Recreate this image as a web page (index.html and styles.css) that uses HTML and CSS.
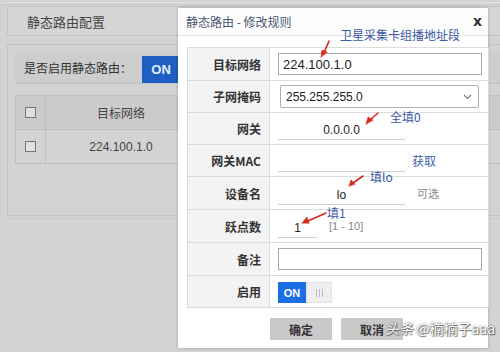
FILE: index.html
```html
<!DOCTYPE html>
<html>
<head>
<meta charset="utf-8">
<link rel="stylesheet" href="styles.css">
</head>
<body>
<div class="page">
  <div class="topline"></div>
  <div class="pagehead">静态路由配置</div>
  <div class="panel">
    <div class="switchrow">
      <span class="switchlabel">是否启用静态路由：</span>
      <span class="onbtn">ON</span>
    </div>
    <div class="grid">
      <div class="grow ghead">
        <div class="gcheck"><span class="cb"></span></div>
        <div class="gcell">目标网络</div>
        <div class="grest"></div>
      </div>
      <div class="grow">
        <div class="gcheck"><span class="cb"></span></div>
        <div class="gcell">224.100.1.0</div>
        <div class="grest"></div>
      </div>
    </div>
  </div>
  <div class="panelline"></div>
</div>

<div class="modal">
  <div class="mtitle">
    <span>静态路由 - 修改规则</span>
    <span class="close">x</span>
  </div>
  <div class="form">
    <div class="frow h33">
      <div class="flabel">目标网络</div>
      <div class="fval"><div class="box wide">224.100.1.0</div></div>
    </div>
    <div class="frow h32">
      <div class="flabel">子网掩码</div>
      <div class="fval"><div class="select">255.255.255.0<svg class="chev" width="9" height="6" viewBox="0 0 9 6"><path d="M1 1 L4.5 4.5 L8 1" fill="none" stroke="#777" stroke-width="1.1"/></svg></div></div>
    </div>
    <div class="frow h32">
      <div class="flabel">网关</div>
      <div class="fval"><div class="uline">0.0.0.0</div></div>
    </div>
    <div class="frow h32">
      <div class="flabel">网关MAC</div>
      <div class="fval"><div class="uline"></div><span class="link">获取</span></div>
    </div>
    <div class="frow h33">
      <div class="flabel">设备名</div>
      <div class="fval"><div class="uline">lo</div><span class="hint">可选</span></div>
    </div>
    <div class="frow h33">
      <div class="flabel">跃点数</div>
      <div class="fval"><div class="uline short">1</div><span class="range">[1 - 10]</span></div>
    </div>
    <div class="frow h33">
      <div class="flabel">备注</div>
      <div class="fval"><div class="box wide"></div></div>
    </div>
    <div class="frow h32 last">
      <div class="flabel">启用</div>
      <div class="fval"><div class="toggle"><span class="ton">ON</span><span class="toff"><i></i><i></i><i></i></span></div></div>
    </div>
  </div>
  <div class="btns">
    <span class="btn">确定</span>
    <span class="btn">取消</span>
  </div>

  <span class="note n1">卫星采集卡组播地址段</span>
  <span class="note n2">全填0</span>
  <span class="note n3">填lo</span>
  <span class="note n4">填1</span>
  <svg class="arrows" width="310" height="340" viewBox="0 0 310 340">
    <g stroke="#d42a1c" stroke-width="1.6" fill="#d42a1c" stroke-linecap="round">
      <line x1="151" y1="33" x2="146" y2="45"/>
      <polygon points="143,49 144,42 149,44" stroke-width="0.6"/>
      <line x1="200" y1="105" x2="192" y2="112"/>
      <polygon points="188,116 190,109 195,112" stroke-width="0.6"/>
      <line x1="185" y1="168" x2="175" y2="175"/>
      <polygon points="171,178 173,172 177,176" stroke-width="0.6"/>
      <line x1="148" y1="205" x2="130" y2="213"/>
      <polygon points="124,215 129,209 131,215" stroke-width="0.6"/>
    </g>
  </svg>
</div>

<div class="watermark"><span class="wm1">头条</span> @楠楠子aaa</div>
</body>
</html>
```
FILE: styles.css
```css
html, body {
  margin: 0;
  padding: 0;
}
body {
  width: 500px;
  height: 352px;
  background: #d3d3d3;
  font-family: "Liberation Sans", "Noto Sans CJK SC", sans-serif;
  font-size: 12px;
  color: #333;
  overflow: hidden;
  position: relative;
}
.page {
  display: flex;
  flex-direction: column;
}
.topline {
  height: 2px;
  margin-top: 2px;
  background: #dcdcdc;
  border-bottom: 1px solid #c9c9c9;
}
.pagehead {
  margin: 1px 0 0 7px;
  height: 28px;
  border: 1px solid #c4c4c4;
  border-right: none;
  background: #d6d6d6;
  padding-left: 19px;
  display: flex;
  align-items: center;
  font-size: 13px;
  color: #444;
  font-family: "Noto Sans CJK SC", sans-serif;
}
.panel {
  margin: 8px 0 0 7px;
  height: 172px;
  border: 1px solid #c4c4c4;
  border-right: none;
  padding: 7px 0 0 7px;
  box-sizing: border-box;
  display: flex;
  flex-direction: column;
}
.panelline {
  margin: 2px 0 0 7px;
  height: 0;
  border-top: 1px solid #c9c9c9;
}
.switchrow {
  height: 31px;
  background: #cdcdcd;
  display: flex;
  align-items: center;
  padding-left: 9px;
  border-bottom: 1px solid #c2c2c2;
}
.switchlabel {
  font-size: 12px;
  color: #333;
  font-family: "Noto Sans CJK SC", sans-serif;
}
.onbtn {
  margin-left: 10px;
  width: 38px;
  height: 27px;
  background: #1f5fc4;
  color: #e8eefb;
  font-weight: bold;
  font-size: 13px;
  display: flex;
  align-items: center;
  justify-content: center;
  margin-top: 3px;
}
.grid {
  margin-top: 11px;
  border-left: 1px solid #bdbdbd;
  display: flex;
  flex-direction: column;
}
.grow {
  height: 33px;
  display: flex;
  border-bottom: 1px solid #bdbdbd;
  background: #d3d3d3;
}
.ghead {
  background: #cbcbcb;
  border-top: 1px solid #c2c2c2;
}
.gcheck {
  width: 29px;
  border-right: 1px solid #bfbfbf;
  display: flex;
  align-items: center;
  justify-content: center;
}
.cb {
  width: 9px;
  height: 9px;
  border: 1px solid #777;
  background: #e0e0e0;
}
.gcell {
  width: 150px;
  display: flex;
  align-items: center;
  justify-content: center;
  color: #444;
}
.ghead .gcell {
  font-family: "Noto Sans CJK SC", sans-serif;
}
.grest {
  flex: 1;
  border-left: 1px solid #c7c7c7;
}

.modal {
  position: absolute;
  left: 178px;
  top: 8px;
  width: 310px;
  height: 340px;
  background: #fff;
  box-shadow: 0 0 3px rgba(0,0,0,0.25);
  display: flex;
  flex-direction: column;
}
.mtitle {
  height: 27px;
  border-bottom: 1px solid #e6e6e6;
  display: flex;
  align-items: center;
  justify-content: space-between;
  padding: 0 6px 0 8px;
  font-family: "Noto Sans CJK SC", sans-serif;
  font-size: 12px;
  color: #4a5a70;
  background: #fdfdfd;
}
.close {
  font-family: "DejaVu Sans", sans-serif;
  font-weight: bold;
  font-size: 14px;
  color: #333;
  margin-top: -2px;
}
.form {
  margin: 11px 0 0 9px;
  width: 300px;
  border: 1px solid #dcdcdc;
  border-bottom: none;
  display: flex;
  flex-direction: column;
}
.frow {
  display: flex;
  border-bottom: 1px solid #dcdcdc;
}
.h33 { height: 32px; }
.h32 { height: 31px; }
.flabel {
  width: 82px;
  background: #f3f3f3;
  border-right: 1px solid #dcdcdc;
  display: flex;
  align-items: center;
  justify-content: flex-end;
  padding-right: 8px;
  box-sizing: border-box;
  font-weight: bold;
  font-size: 12px;
  color: #333;
  font-family: "Noto Sans CJK SC", sans-serif;
}
.fval {
  flex: 1;
  display: flex;
  align-items: center;
  padding-left: 8px;
}
.box {
  height: 20px;
  border: 1px solid #a9a9a9;
  display: flex;
  align-items: center;
  padding-left: 4px;
  font-size: 13px;
  color: #222;
  box-sizing: content-box;
}
.wide { width: 198px; }
.select {
  margin-left: 2px;
  width: 186px;
  height: 21px;
  border: 1px solid #b0b0b0;
  border-radius: 2px;
  display: flex;
  align-items: center;
  justify-content: space-between;
  padding: 0 6px 0 5px;
  font-size: 12px;
  color: #222;
}
.uline {
  width: 127px;
  height: 18px;
  margin-top: 4px;
  border-bottom: 1px solid #cfcfcf;
  display: flex;
  align-items: center;
  justify-content: center;
  font-size: 12px;
  color: #222;
}
.short { width: 39px; }
.link {
  margin-left: 7px;
  color: #3b62b0;
  font-size: 12px;
  font-family: "Noto Sans CJK SC", sans-serif;
}
.hint {
  margin-left: 12px;
  color: #888;
  font-size: 11px;
  font-family: "Noto Sans CJK SC", sans-serif;
}
.range {
  margin-left: 12px;
  color: #888;
  font-size: 11px;
}
.toggle {
  display: flex;
  height: 21px;
  margin-top: 2px;
}
.ton {
  width: 28px;
  background: #1a6fe6;
  color: #fff;
  font-weight: bold;
  font-size: 11px;
  display: flex;
  align-items: center;
  justify-content: center;
}
.toff {
  width: 26px;
  background: #efefef;
  border: 1px solid #e2e2e2;
  box-sizing: border-box;
  display: flex;
  align-items: center;
  justify-content: center;
  gap: 2px;
}
.toff i {
  width: 1px;
  height: 8px;
  background: #bbb;
}
.btns {
  display: flex;
  gap: 9px;
  margin: 10px 0 0 92px;
}
.btn {
  width: 62px;
  height: 22px;
  background: #c9c9c9;
  display: flex;
  align-items: center;
  justify-content: center;
  font-weight: bold;
  font-size: 12px;
  color: #333;
  font-family: "Noto Sans CJK SC", sans-serif;
}
.note {
  position: absolute;
  color: #3c58a8;
  font-size: 12px;
  font-family: "Noto Sans CJK SC", sans-serif;
  line-height: 14px;
}
.n1 { left: 162px; top: 20px; }
.n2 { left: 212px; top: 102px; }
.n3 { left: 192px; top: 162px; }
.n4 { left: 149px; top: 198px; }
.arrows {
  position: absolute;
  left: 0;
  top: 0;
}
.watermark {
  position: absolute;
  left: 385px;
  top: 318px;
  color: #fff;
  font-size: 14px;
  font-family: "Noto Sans CJK SC", sans-serif;
  text-shadow: 0 0 2px rgba(0,0,0,0.7), 1px 1px 1px rgba(0,0,0,0.5);
  letter-spacing: 0px;
  white-space: nowrap;
}
.wm1 {
  font-style: italic;
}
```
